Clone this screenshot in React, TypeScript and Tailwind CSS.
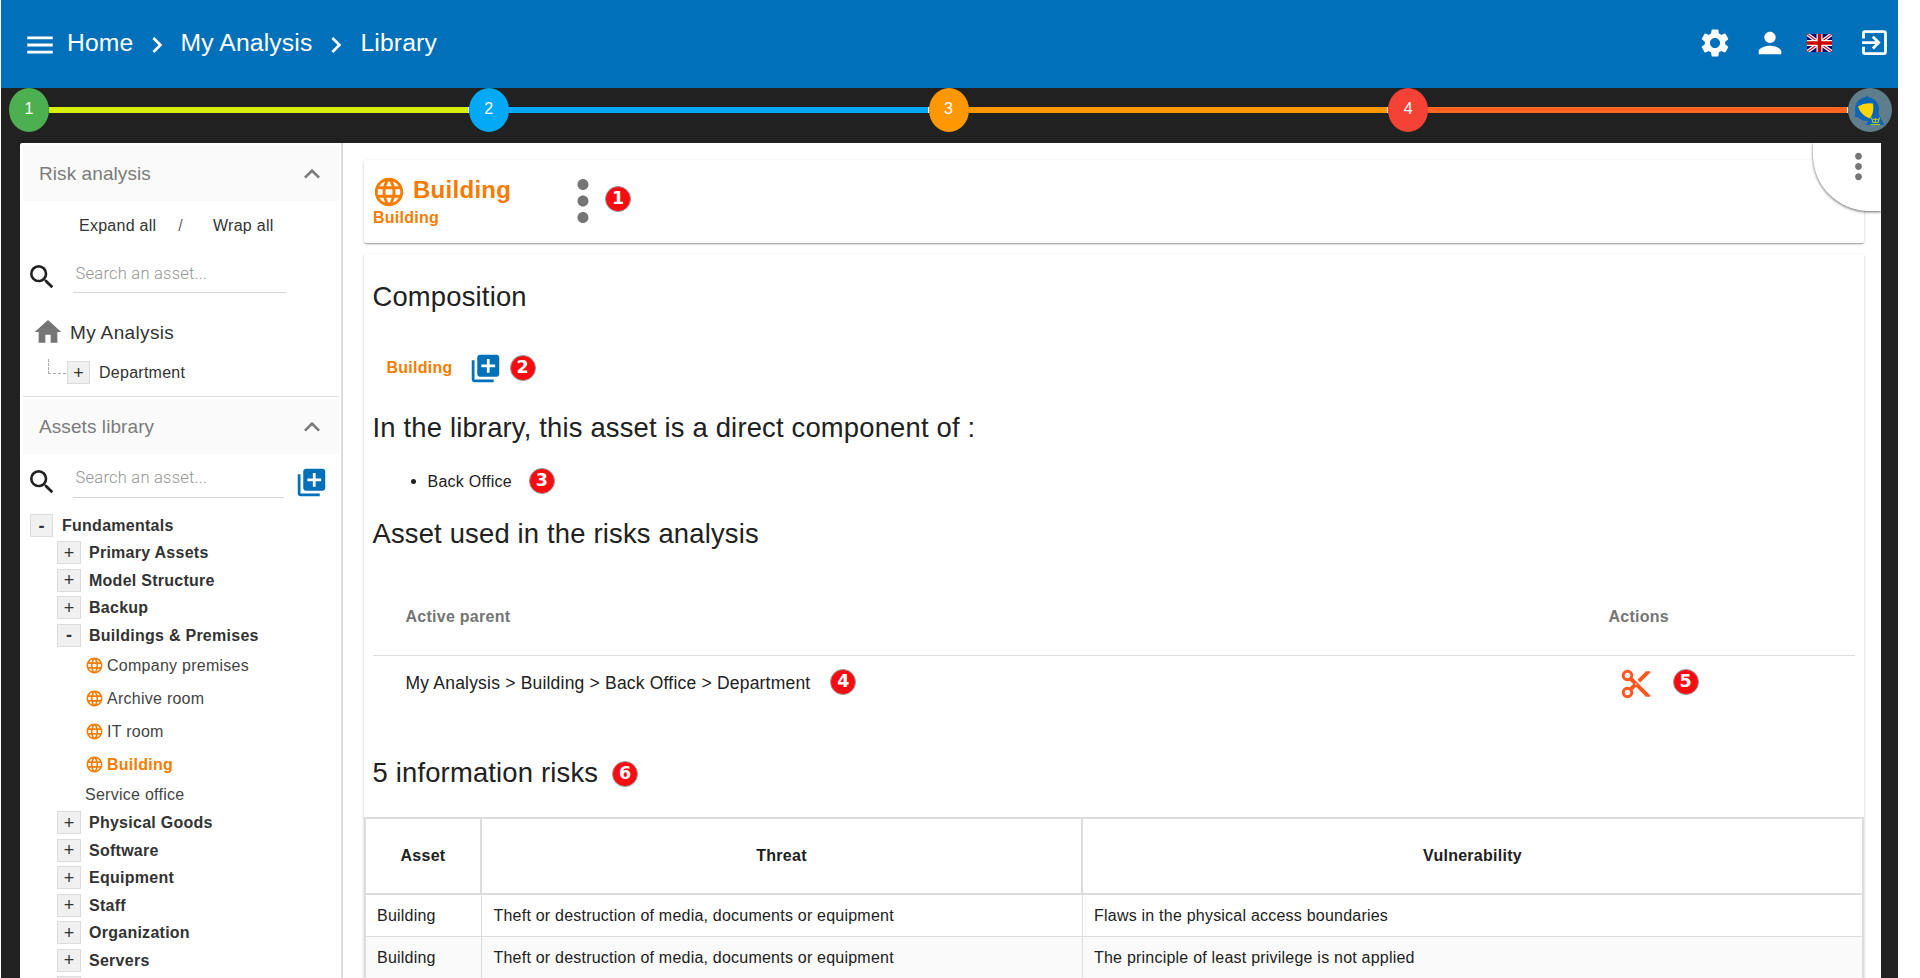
import React from "react";
import {
  MdMenu, MdChevronRight, MdSettings, MdPerson, MdExitToApp, MdExpandLess, MdSearch,
  MdHome, MdLibraryAdd, MdLanguage, MdMoreVert, MdContentCut,
} from "react-icons/md";

const steps = [
  { n: "1", dot: "bg-[#4caf50]", bar: "bg-[#d4f00c]" },
  { n: "2", dot: "bg-[#03a9f4]", bar: "bg-[#03a9f4]" },
  { n: "3", dot: "bg-[#ff9800]", bar: "bg-[#ff9800]" },
  { n: "4", dot: "bg-[#f44336]", bar: "bg-[#ff6421]" },
];

function Badge({ n, className = "" }: { n: string; className?: string }) {
  return (
    <span
      className={`flex size-[26px] shrink-0 items-center justify-center rounded-full border border-[#999] bg-[#f80c12] font-['DejaVu_Sans',sans-serif] text-[17.500px] leading-none font-bold tracking-normal text-white ${className}`}
    >
      {n}
    </span>
  );
}

function Flag() {
  return (
    <svg viewBox="0 0 25 18" className="h-[18px] w-[25px]">
      <rect width="25" height="18" fill="#006" />
      <path d="M0 0L25 18M25 0L0 18" stroke="#fff" strokeWidth="3.6" />
      <path d="M0 0L25 18M25 0L0 18" stroke="#d8142c" strokeWidth="1.2" />
      <path d="M12.5 0V18M0 9H25" stroke="#fff" strokeWidth="6" />
      <path d="M12.5 0V18M0 9H25" stroke="#c00" strokeWidth="3.6" />
    </svg>
  );
}

function Logo() {
  return (
    <svg viewBox="0 0 44 44" className="size-11">
      <circle cx="22" cy="22" r="22" fill="#607d8b" />
      <circle cx="19" cy="21" r="12" fill="#0b66b5" />
      <path d="M19 7L24.500 15H14.500ZM6.500 29L9 19L17 29ZM36.500 37H17.700L28 21Z" fill="#0b66b5" />
      <path d="M10 18.500Q17 14 25 15.500Q26.500 24 22 30.500Q13 27.500 10 18.500Z" fill="#ffd600" />
      <path d="M23.500 29.500L25 34.500H30L31.500 29.500M27.500 30V34.500M25 31.500H30M22.500 36.500H32" stroke="#b5c22e" strokeWidth="1.200" fill="none" />
    </svg>
  );
}

function PanelHeader({ title }: { title: string }) {
  return (
    <div className="mr-[2px] ml-[3px] flex h-[55px] items-center justify-between bg-[#fafafa] pr-[11px] pl-[16px] text-[19px] tracking-[0.08px] text-[#7b7b7b]">
      <span>{title}</span>
      <MdExpandLess className="size-[32px]" />
    </div>
  );
}

function Search({ add = false }: { add?: boolean }) {
  return (
    <div className="flex items-start pl-[6px]">
      <MdSearch className="size-[32px] text-[#212121]" />
      <div className={`mt-px ml-[15px] h-[31px] border-b border-[#d4d4d4] pl-[2.500px] font-[Roboto,sans-serif] text-[16.500px] font-light tracking-[0.24px] text-[#949494] ${add ? "w-[211px] leading-[22px]" : "w-[213px] leading-[24px]"}`}>
        Search an asset...
      </div>
      {add && <MdLibraryAdd className="ml-[11px] size-[33px] text-[#0070ba]" />}
    </div>
  );
}

function Toggle({ sign, wide = false }: { sign: string; wide?: boolean }) {
  return (
    <span
      className={`flex h-[23px] items-center justify-center border border-[#dcdcdc] bg-[#f0f0f0] text-[18px] leading-none tracking-normal ${wide ? "w-6" : "w-[23px]"} ${sign === "-" ? "font-bold" : "font-normal"}`}
    >
      {sign}
    </span>
  );
}

function Folder({ name, open = false }: { name?: string; open?: boolean }) {
  return (
    <div className="flex h-[27.500px] items-center gap-2 pl-[37px] font-bold">
      <Toggle sign={open ? "-" : "+"} wide />
      <span>{name}</span>
    </div>
  );
}

function Leaf({ name, active = false }: { name: string; active?: boolean }) {
  return (
    <div className={`flex h-[33px] items-center gap-[3px] pl-[65px] ${active ? "font-bold text-[#f57c00]" : "text-[#444]"}`}>
      <MdLanguage className="size-[19px] text-[#f57c00]" />
      <span>{name}</span>
    </div>
  );
}

function Sidebar() {
  return (
    <aside className="w-[323px] shrink-0 border-r-2 border-[#ddd] pt-[3px] text-[#333]">
      <PanelHeader title="Risk analysis" />
      <div className="flex h-[48px] items-center pl-[59px]">
        <span>Expand all</span>
        <span className="ml-[22px] text-[#666]">/</span>
        <span className="ml-[30px]">Wrap all</span>
      </div>
      <div className="pt-[12px]">
        <Search />
      </div>
      <div className="mt-[23px] flex items-center pl-[12px]">
        <MdHome className="size-[32px] text-[#757575]" />
        <span className="ml-[6px] text-[19px] tracking-[0.35px]">My Analysis</span>
      </div>
      <div className="mt-[13px] flex h-[23px] items-center pl-[28px]">
        <span className="-mt-[12px] h-[15px] w-[18px] border-b border-l border-dashed border-[#aaa]" />
        <span className="ml-px"><Toggle sign="+" /></span>
        <span className="ml-[9px]">Department</span>
      </div>
      <div className="mr-[2px] mt-[12px] mb-[2px] ml-[3px] h-px bg-[#ddd]" />
      <PanelHeader title="Assets library" />
      <div className="h-[44px] pt-[12px]">
        <Search add />
      </div>
      <div className="mt-[14px] flex h-[27px] items-center gap-[9px] pl-[10px] font-bold">
        <Toggle sign="-" />
        <span>Fundamentals</span>
      </div>
      <Folder name="Primary Assets" />
      <Folder name="Model Structure" />
      <Folder name="Backup" />
      <Folder name="Buildings & Premises" open />
      <Leaf name="Company premises" />
      <Leaf name="Archive room" />
      <Leaf name="IT room" />
      <Leaf name="Building" active />
      <div className="flex h-[28px] items-center pb-[2px] pl-[65px] text-[#444]">Service office</div>
      <Folder name="Physical Goods" />
      <Folder name="Software" />
      <Folder name="Equipment" />
      <Folder name="Staff" />
      <Folder name="Organization" />
      <Folder name="Servers" />
      <Folder />
    </aside>
  );
}

const risks = [
  ["Building", "Theft or destruction of media, documents or equipment", "Flaws in the physical access boundaries"],
  ["Building", "Theft or destruction of media, documents or equipment", "The principle of least privilege is not applied"],
];

const cardShadow = "shadow-[0_1px_3px_0_rgba(0,0,0,0.2),0_1px_1px_0_rgba(0,0,0,0.14),0_2px_1px_-1px_rgba(0,0,0,0.12)]";

export default function App() {
  return (
    <div className="h-[978px] overflow-hidden bg-white pr-[22px] pl-px font-['Liberation_Sans',Arial,sans-serif] text-[16px] leading-[23px] tracking-[0.26px] text-[#212121]">
      <div className="h-full bg-[#212121]">
        <header className="flex h-[88px] items-center bg-[#0070ba] text-white">
          <MdMenu className="mt-px ml-[22px] size-[34px]" />
          <nav className="ml-[10px] flex items-center pb-[4px] text-[24.700px] tracking-[0.15px]">
            <span>Home</span>
            <MdChevronRight className="mr-[7px] ml-[8px] mt-[5px] size-[32px]" />
            <span>My Analysis</span>
            <MdChevronRight className="mx-[8px] mt-[5px] size-[32px]" />
            <span>Library</span>
          </nav>
          <div className="ml-auto flex items-center pb-[3px]">
            <MdSettings className="size-[34px]" />
            <MdPerson className="ml-[21px] size-[34px]" />
            <span className="ml-[20px]"><Flag /></span>
            <MdExitToApp className="mr-[7px] ml-[26px] size-[33px]" />
          </div>
        </header>

        <div className="flex h-[44px] items-center pr-[6px] pl-[8px]">
          {steps.map((s) => (
            <div key={s.n} className="flex flex-1 items-center">
              <span className={`flex h-[44px] w-[40px] shrink-0 justify-center rounded-[50%] pt-[9px] text-white ${s.dot}`}>{s.n}</span>
              <span className={`h-[6px] flex-1 border-r border-white ${s.bar}`} />
            </div>
          ))}
          <Logo />
        </div>

        <div className="relative mt-[11px] mr-[17px] ml-[19px] flex h-[835px] overflow-hidden rounded-tl-[2px] bg-white">
          <Sidebar />
          <main className="min-w-0 flex-1 pt-[17px] pr-[17px] pl-[21px]">
            <section className={`flex h-[83px] rounded-[2px] bg-white pl-[9px] ${cardShadow}`}>
              <div className="w-[190px] font-bold text-[#f57c00]">
                <div className="flex items-center pt-[10px] text-[24px] tracking-[0.28px]">
                  <MdLanguage className="-ml-px mt-[5px] size-[34px]" />
                  <span className="ml-[7px]">Building</span>
                </div>
                <div className="-mt-[3px]">Building</div>
              </div>
              <MdMoreVert className="mt-[8px] -ml-[13px] size-[66px] text-[#757575]" />
              <Badge n="1" className="mt-[26px] -ml-[11px]" />
            </section>

            <section className={`mt-[11px] h-[760px] rounded-[2px] bg-white ${cardShadow}`}>
              <div className="pt-[25px] pr-[9px] pl-[8.500px]">
                <h2 className="text-[27.400px] leading-9 tracking-[0.18px]">Composition</h2>
                <div className="mt-[37px] flex h-[31px] items-center pl-[14px]">
                  <span className="font-bold text-[#f57c00]">Building</span>
                  <MdLibraryAdd className="mt-px ml-[16px] size-[33px] text-[#0070ba]" />
                  <Badge n="2" className="ml-[8px]" />
                </div>
                <h2 className="mt-[27px] text-[27.400px] leading-9 tracking-[0.18px]">In the library, this asset is a direct component of :</h2>
                <div className="mt-[22px] flex h-[26px] items-center pl-[38px]">
                  <span className="size-[5px] rounded-full bg-[#212121]" />
                  <span className="ml-[12px]">Back Office</span>
                  <Badge n="3" className="ml-[17px]" />
                </div>
                <h2 className="mt-[22px] text-[27.400px] leading-9 tracking-[0.18px]">Asset used in the risks analysis</h2>
                <div className="mt-[26px] flex h-[78px] items-center border-b border-[#ddd] font-bold text-[#757575]">
                  <span className="w-[1236px] pl-[33px]">Active parent</span>
                  <span>Actions</span>
                </div>
                <div className="flex h-[55px] items-center">
                  <span className="w-[1246px] pl-[33px]">
                    <span className="flex items-center text-[17.500px] tracking-[0.2px]">
                      My Analysis &gt; Building &gt; Back Office &gt; Department
                      <Badge n="4" className="mb-[3px] ml-[20px]" />
                    </span>
                  </span>
                  <MdContentCut className="size-[34px] text-[#ff5722]" />
                  <Badge n="5" className="mb-[3px] ml-[20px]" />
                </div>
                <div className="mt-[37px] flex h-[50px] items-center">
                  <h2 className="pb-[2px] text-[27.400px] tracking-[0.18px]">5 information risks</h2>
                  <Badge n="6" className="mt-[2px] ml-[14px]" />
                </div>
              </div>
              <div className="mt-[19px] border-2 border-[#ddd]">
                <div className="grid h-[76px] grid-cols-[116px_601px_1fr] border-b-2 border-[#ddd] text-center leading-[74px] font-bold">
                  <div className="border-r-2 border-[#ddd]">Asset</div>
                  <div className="border-r-2 border-[#ddd]">Threat</div>
                  <div>Vulnerability</div>
                </div>
                {risks.map((r, i) => (
                  <div key={i} className={`grid h-[42px] grid-cols-[116px_601px_1fr] border-b border-[#ddd] leading-[41px] tracking-[0.22px] ${i % 2 ? "bg-[#fafafa]" : ""}`}>
                    <div className="border-r border-[#ddd] pl-[11px]">{r[0]}</div>
                    <div className="border-r border-[#ddd] pl-[11.500px]">{r[1]}</div>
                    <div className="pl-[11px]">{r[2]}</div>
                  </div>
                ))}
              </div>
            </section>
          </main>
          <div className="absolute top-0 right-0 h-[68px] w-[68.500px] rounded-bl-[56px] bg-white shadow-[0_1px_3px_rgba(0,0,0,0.6)]">
            <MdMoreVert className="mt-[3px] ml-[25px] size-[41px] text-[#757575]" />
          </div>
        </div>
      </div>
    </div>
  );
}
